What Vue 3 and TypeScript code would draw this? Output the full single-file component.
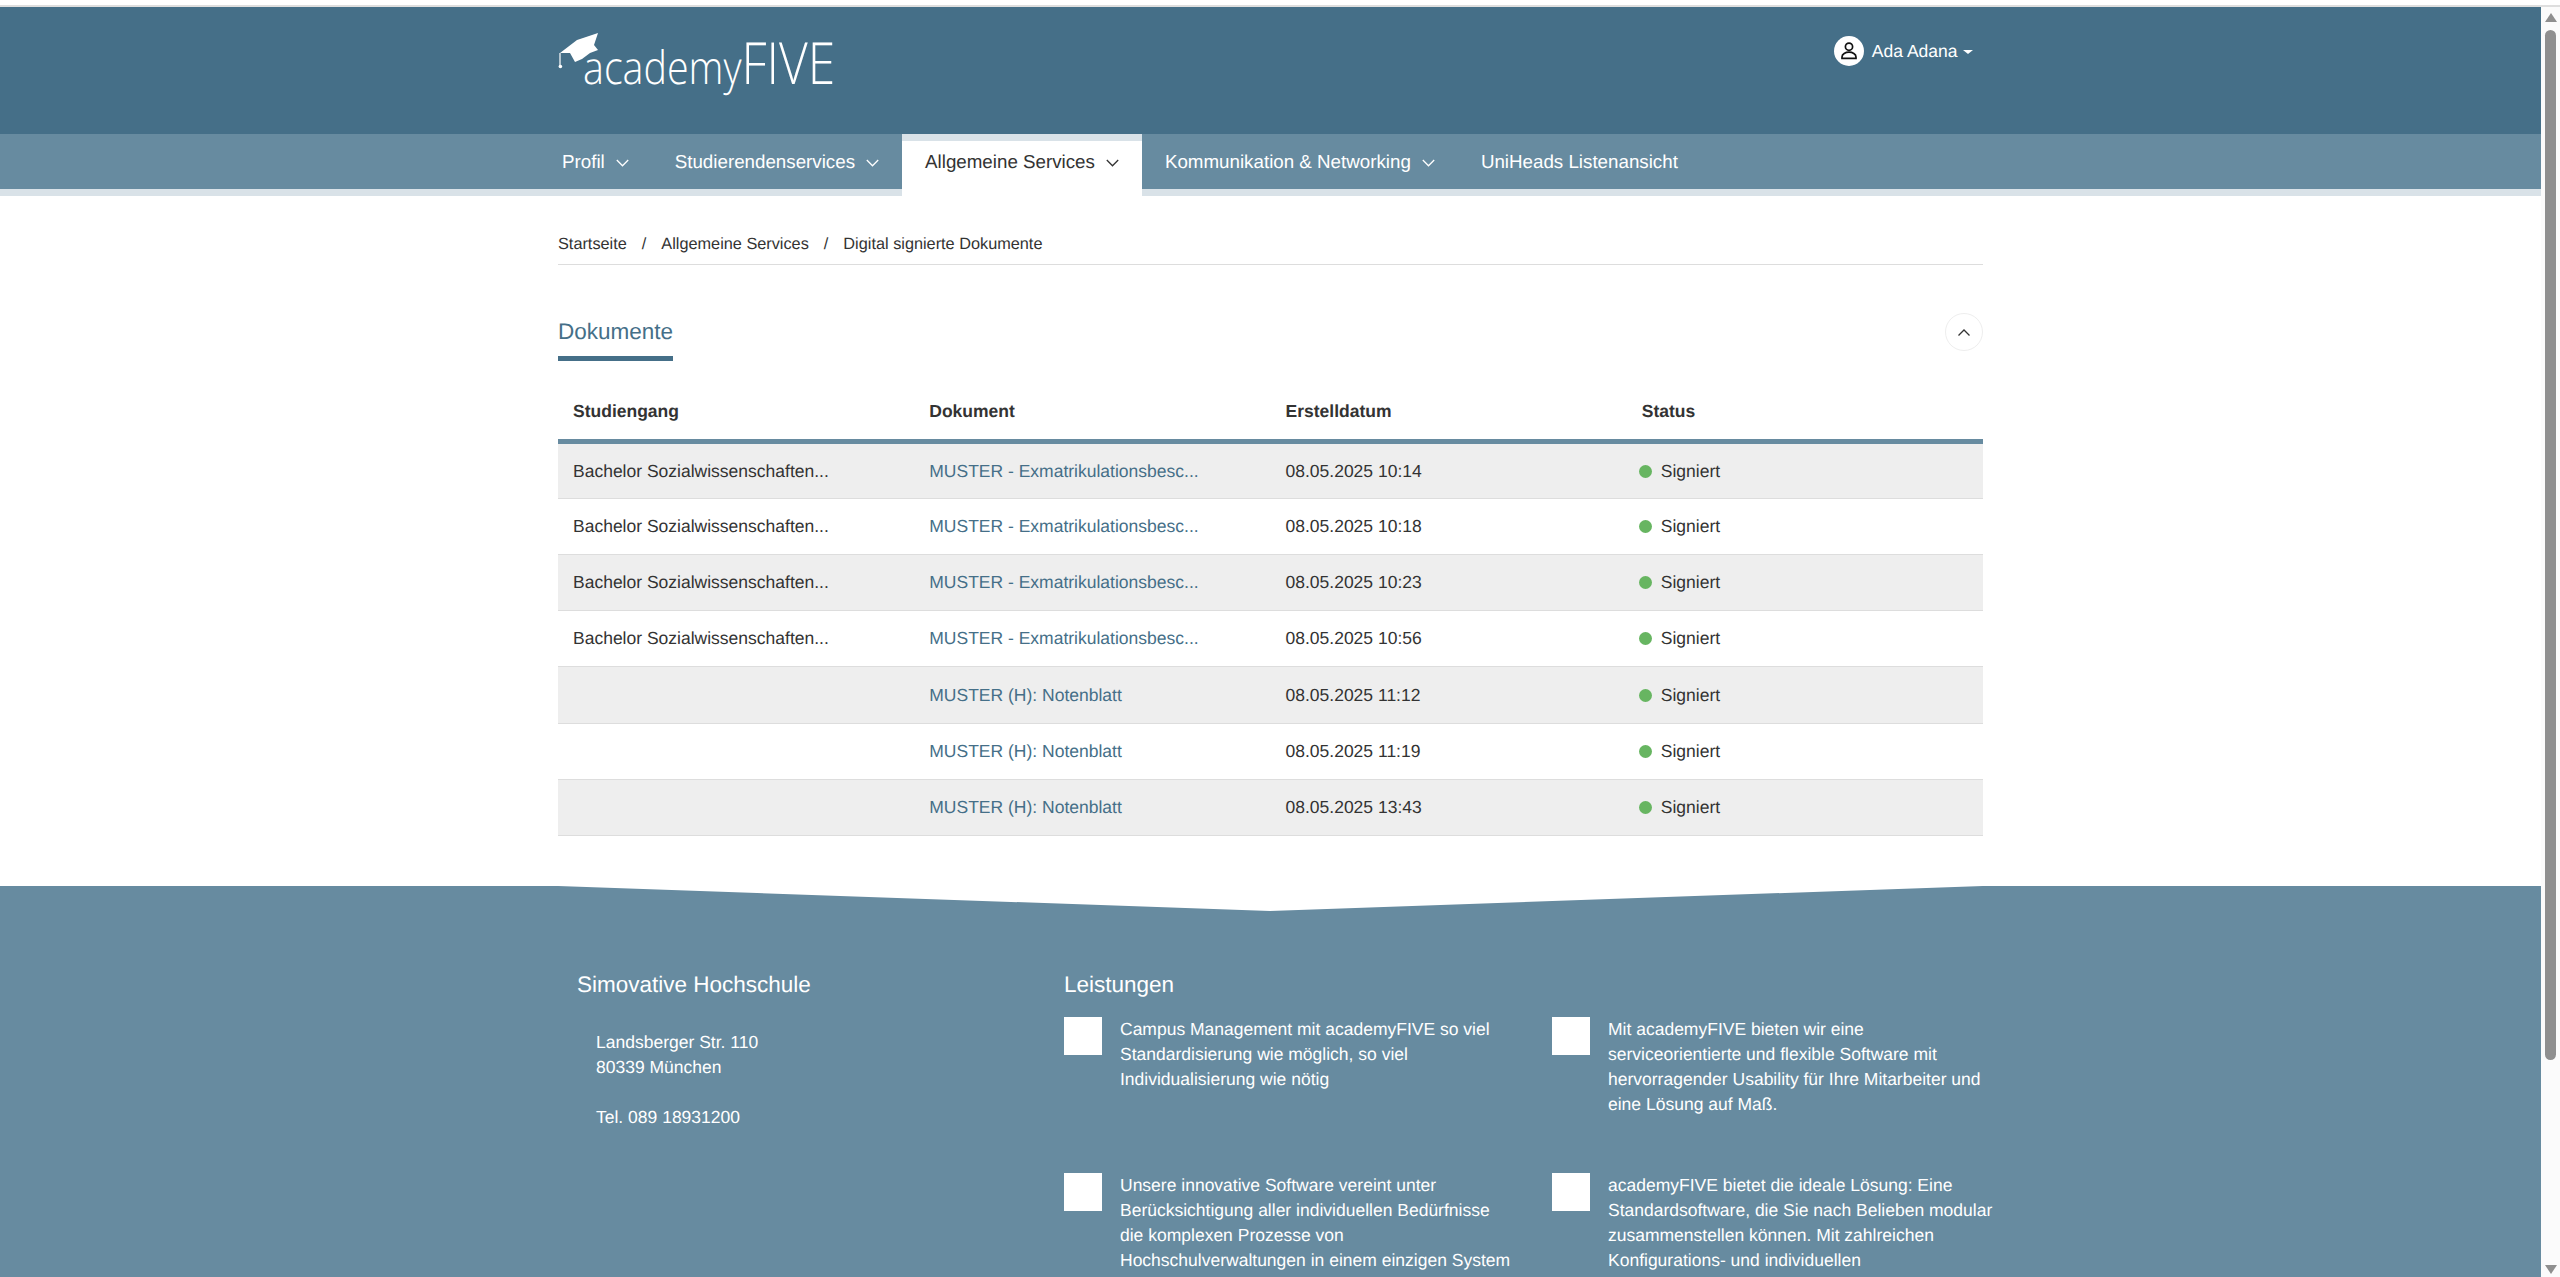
<script setup lang="ts">
interface Row { course: string; doc: string; date: string }
const longCourse = 'Bachelor Sozialwissenschaften...'
const exm = 'MUSTER - Exmatrikulationsbesc...'
const note = 'MUSTER (H): Notenblatt'
const rows: Row[] = [
  { course: longCourse, doc: exm, date: '08.05.2025 10:14' },
  { course: longCourse, doc: exm, date: '08.05.2025 10:18' },
  { course: longCourse, doc: exm, date: '08.05.2025 10:23' },
  { course: longCourse, doc: exm, date: '08.05.2025 10:56' },
  { course: '', doc: note, date: '08.05.2025 11:12' },
  { course: '', doc: note, date: '08.05.2025 11:19' },
  { course: '', doc: note, date: '08.05.2025 13:43' },
]
const navItems = [
  { label: 'Profil', chevron: true, active: false },
  { label: 'Studierendenservices', chevron: true, active: false },
  { label: 'Allgemeine Services', chevron: true, active: true },
  { label: 'Kommunikation & Networking', chevron: true, active: false },
  { label: 'UniHeads Listenansicht', chevron: false, active: false },
]
const features = [
  'Campus Management mit academyFIVE so viel Standardisierung wie möglich, so viel Individualisierung wie nötig',
  'Mit academyFIVE bieten wir eine serviceorientierte und flexible Software mit hervorragender Usability für Ihre Mitarbeiter und eine Lösung auf Maß.',
  'Unsere innovative Software vereint unter Berücksichtigung aller individuellen Bedürfnisse die komplexen Prozesse von Hochschulverwaltungen in einem einzigen System',
  'academyFIVE bietet die ideale Lösung: Eine Standardsoftware, die Sie nach Belieben modular zusammenstellen können. Mit zahlreichen Konfigurations- und individuellen',
]
</script>

<template>
  <div class="screen">
    <div class="top-strip"></div>
    <div class="shell">
      <main class="page">
        <header class="masthead">
          <div class="wrap masthead-inner">
            <svg class="logo" width="280" height="72" viewBox="0 0 280 72" role="img" aria-label="academyFIVE">
              <polygon class="logo-cap" points="2,20 19,7 40,0 36,12 40,17 32,20 24,26 17,29 12,20" />
              <line class="logo-cord" x1="2" y1="20" x2="2" y2="33" />
              <circle class="logo-cap" cx="2.4" cy="33.5" r="1.8" />
              <g transform="translate(25 51) scale(.857 1)">
                <text class="logo-word">academy<tspan class="logo-caps">FIVE</tspan></text>
              </g>
            </svg>
            <div class="user">
              <span class="avatar">
                <svg width="30" height="30" viewBox="0 0 30 30">
                  <circle class="avatar-line" cx="15" cy="10.7" r="3.6" />
                  <path class="avatar-line" d="M8 22.300v-1.300c0-3 3.500-4.800 7-4.800s7 1.800 7 4.800v1.300z" />
                </svg>
              </span>
              <span class="user-name">Ada Adana</span>
              <span class="caret"></span>
            </div>
          </div>
        </header>

        <nav class="navbar">
          <ul class="wrap nav-list">
            <li v-for="item in navItems" :key="item.label" class="nav-item" :class="{ active: item.active }">
              <span>{{ item.label }}</span>
              <svg v-if="item.chevron" class="chevron" width="13" height="8" viewBox="0 0 13 8">
                <path d="M.8 1l5.700 5.800L12.200 1" />
              </svg>
            </li>
          </ul>
        </nav>

        <section class="wrap content">
          <div class="crumbs">
            <span>Startseite</span><span class="sep">/</span><span>Allgemeine Services</span><span class="sep">/</span><span>Digital signierte Dokumente</span>
          </div>

          <div class="section-head">
            <h2 class="section-title">Dokumente</h2>
            <button class="collapse" type="button" aria-label="Einklappen">
              <svg width="14" height="9" viewBox="0 0 14 9"><path d="M1.500 7.500L7 2l5.500 5.500" /></svg>
            </button>
          </div>

          <table class="docs">
            <thead>
              <tr>
                <th>Studiengang</th>
                <th>Dokument</th>
                <th>Erstelldatum</th>
                <th>Status</th>
              </tr>
            </thead>
            <tbody>
              <tr v-for="row in rows" :key="row.date">
                <td>{{ row.course }}</td>
                <td class="doc-link">{{ row.doc }}</td>
                <td>{{ row.date }}</td>
                <td><span class="dot"></span>Signiert</td>
              </tr>
            </tbody>
          </table>
        </section>

        <footer class="footer">
          <svg class="notch" width="1425" height="25" viewBox="0 0 1425 25">
            <polygon points="0,0 712,25 1425,0" />
          </svg>
          <div class="wrap footer-grid">
            <div class="contact">
              <h3 class="footer-title">Simovative Hochschule</h3>
              <address class="address">
                Landsberger Str. 110<br />80339 München<br /><br />Tel. 089 18931200
              </address>
            </div>
            <div>
              <h3 class="footer-title">Leistungen</h3>
              <div class="features">
                <div v-for="text in features" :key="text" class="feature">
                  <span class="feature-icon"></span>
                  <p class="feature-text">{{ text }}</p>
                </div>
              </div>
            </div>
          </div>
        </footer>
      </main>

      <aside class="scrollbar" aria-hidden="true">
        <span class="arrow arrow-up"></span>
        <span class="thumb"></span>
        <span class="arrow arrow-down"></span>
      </aside>
    </div>
  </div>
</template>

<style>
html, body { margin: 0; background: #fff; }
</style>

<style scoped>
.screen {
  width: 2560px;
  height: 1277px;
  overflow: hidden;
  display: flex;
  flex-direction: column;
  font-family: "Liberation Sans", Arial, sans-serif;
  font-size: 17.5px;
  line-height: 25px;
  color: #333;
  background: #fff;
  padding-top: 5px;
  box-sizing: border-box;
  text-rendering: geometricPrecision;
}
.top-strip { height: 2px; background: #dedede; flex: none; }
.shell { flex: 1; min-height: 0; display: flex; }
.page { flex: 1; min-width: 0; overflow: hidden; }
.wrap { width: 1425px; margin: 0 auto; box-sizing: border-box; }

.masthead { height: 127px; background: #456f88; }
.masthead-inner { display: flex; justify-content: space-between; align-items: flex-start; height: 100%; }
.logo { margin-top: 26px; overflow: visible; }
.logo-cap { fill: #fff; }
.logo-cord { stroke: #fff; stroke-width: 1.2; }
.logo-word { fill: #fff; font-family: "Open Sans", sans-serif; font-weight: 300; font-size: 46px; }
.logo-caps { font-size: 58px; }
.user { display: flex; align-items: center; margin-top: 29px; padding-right: 10px; color: #fff; }
.avatar { width: 30px; height: 30px; border-radius: 50%; background: #fff; margin-right: 8px; }
.avatar svg { display: block; }
.avatar-line { fill: none; stroke: #111; stroke-width: 1.7; }
.caret { width: 0; height: 0; margin-left: 5.500px; margin-top: 2px; border-left: 5px solid transparent; border-right: 5px solid transparent; border-top: 4.500px solid #fff; }

.navbar { background: #678ba0; height: 62px; border-bottom: 7px solid #d9e2e8; box-sizing: border-box; }
.nav-list { list-style: none; margin: 0 auto; padding: 0; display: flex; height: 55px; }
.nav-item { display: flex; align-items: center; height: 55px; padding: 0 23px; color: #fff; box-sizing: border-box; white-space: nowrap; font-size: 18.75px; }
.nav-item:first-child { margin-left: -19px; }
.nav-item.active { background: #fff; color: #333; height: 62px; border-top: 7px solid #d9e2e8; padding-bottom: 14px; }
.chevron { margin-left: 11px; margin-top: 2px; }
.chevron path { fill: none; stroke: currentColor; stroke-width: 1.3; }

.crumbs { padding: 36px 0 7px; border-bottom: 1px solid #ddd; font-size: 16.3px; height: 69px; box-sizing: border-box; }
.sep { margin: 0 15px; }

.section-head { display: flex; justify-content: space-between; align-items: flex-start; margin-top: 52px; }
.section-title { margin: 0; padding-bottom: 9px; height: 30px; line-height: 30px; font-size: 22.5px; font-weight: 400; color: #456f88; border-bottom: 5px solid #456f88; box-sizing: content-box; }
.collapse { width: 38px; height: 38px; margin-top: -4px; border: 1px solid #eee; border-radius: 50%; background: #fff; padding: 0; display: flex; align-items: center; justify-content: center; }
.collapse path { fill: none; stroke: #333; stroke-width: 1.3; }

.docs { width: 100%; table-layout: fixed; border-collapse: separate; border-spacing: 0; }
.docs th { text-align: left; font-weight: 700; padding: 38px 0 15px 15px; border-bottom: 5px solid #678ba0; line-height: 25px; }
.docs td { height: 55px; padding: 0 0 0 15px; border-bottom: 1px solid #ddd; white-space: nowrap; }
.docs tbody tr:nth-child(1) td { height: 54px; }
.docs tbody tr:nth-child(5) td { height: 56px; }
.docs tbody tr:nth-child(odd) td { background: #eee; }
.doc-link { color: #456f88; }
.dot { display: inline-block; width: 13px; height: 13px; border-radius: 50%; background: #67b561; margin: 0 9px 0 -3px; vertical-align: -1px; }

.footer { position: relative; background: #678ba0; margin-top: 50px; color: #fff; height: 400px; overflow: hidden; }
.notch { position: absolute; left: 558px; top: 0; display: block; }
.notch polygon { fill: #fff; }
.footer-grid { display: grid; grid-template-columns: 506px 1fr; padding-top: 85px; }
.contact { padding-left: 19px; }
.footer-title { margin: 0; font-size: 22.5px; font-weight: 400; line-height: 28px; }
.address { font-style: normal; padding: 31px 0 0 19px; }
.features { display: grid; grid-template-columns: 488px 1fr; margin-top: 18px; }
.feature { display: flex; align-items: flex-start; height: 156px; }
.feature-icon { width: 38px; height: 38px; background: #fff; flex: none; margin-right: 18px; }
.feature-text { margin: 0; width: 392px; }

.scrollbar { width: 19px; flex: none; background: #fbfbfb; display: flex; flex-direction: column; align-items: center; }
.arrow { width: 0; height: 0; border-left: 6px solid transparent; border-right: 6px solid transparent; }
.arrow-up { margin-top: 6px; border-bottom: 9px solid #8f8f8f; }
.thumb { width: 11px; height: 1030px; margin-top: 8px; background: #8f8f8f; border-radius: 6px; }
.arrow-down { margin-top: 205px; border-top: 9px solid #8f8f8f; }
</style>
